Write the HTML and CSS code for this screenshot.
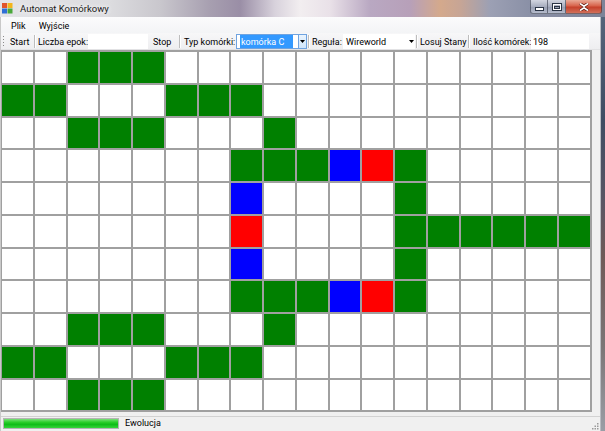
FILE: index.html
```html
<!DOCTYPE html>
<html lang="pl">
<head>
<meta charset="utf-8">
<title>Automat Komórkowy</title>
<link rel="stylesheet" href="styles.css">
</head>
<body>
<div class="window">
  <header class="titlebar">
    <svg class="app-icon" viewBox="0 0 11 11" width="11" height="11">
      <rect x="0" y="0" width="5" height="5" fill="#e2542a"/>
      <rect x="5.5" y="0" width="5" height="5" fill="#f3b51c"/>
      <rect x="0" y="5.5" width="5" height="5" fill="#2f6fd6"/>
      <rect x="5.5" y="5.5" width="5" height="5" fill="#4aa83a"/>
    </svg>
    <span class="title">Automat Komórkowy</span>
    <div class="caption-buttons">
      <div class="cap-btn cap-min">
        <svg viewBox="0 0 9 4" width="9" height="4"><rect x="0.5" y="0.5" width="8" height="3" fill="#fff" stroke="#2b3545" stroke-width="1"/></svg>
      </div>
      <div class="cap-btn cap-max">
        <svg viewBox="0 0 10 8" width="10" height="8"><rect x="0.5" y="0.5" width="9" height="7" fill="none" stroke="#2b3545" stroke-width="1"/><rect x="1.5" y="1.5" width="7" height="5" fill="none" stroke="#fff" stroke-width="1"/><rect x="2.5" y="3.5" width="5" height="2" fill="none" stroke="#2b3545" stroke-width="1"/></svg>
      </div>
      <div class="cap-btn cap-close">
        <svg viewBox="0 0 10 8" width="10" height="8"><path d="M1 0.5 L5 3.2 L9 0.5 M1 7.5 L5 4.8 L9 7.5" stroke="#5a1a10" stroke-width="3" fill="none"/><path d="M1 0.5 L5 3.2 L9 0.5 M1 7.5 L5 4.8 L9 7.5" stroke="#fff" stroke-width="1.6" fill="none"/></svg>
      </div>
    </div>
  </header>
  <div class="frame">
    <div class="client">
      <nav class="menu">
        <span class="menu-item">Plik</span>
        <span class="menu-item">Wyjście</span>
      </nav>
      <div class="toolbar">
        <span class="grip"></span>
        <span class="tb-btn tb-start">Start</span>
        <span class="tb-sep"></span>
        <span class="tb-label tb-epoki">Liczba epok:</span>
        <span class="tb-text tb-text-epoki"></span>
        <span class="tb-btn tb-stop">Stop</span>
        <span class="tb-sep"></span>
        <span class="tb-label tb-typ">Typ komórki:</span>
        <span class="tb-combo tb-combo-focus">
          <span class="combo-value"><span class="combo-selected">komórka C</span></span>
          <span class="combo-arrow combo-arrow-hot"><svg viewBox="0 0 5 3" width="5" height="3"><path d="M0 0 H5 L2.5 3 Z" fill="#000"/></svg></span>
        </span>
        <span class="tb-sep"></span>
        <span class="tb-label tb-regula">Reguła:</span>
        <span class="tb-combo tb-combo-plain">
          <span class="combo-value">Wireworld</span>
          <span class="combo-arrow"><svg viewBox="0 0 5 3" width="5" height="3"><path d="M0 0 H5 L2.5 3 Z" fill="#000"/></svg></span>
        </span>
        <span class="tb-sep"></span>
        <span class="tb-btn tb-losuj">Losuj Stany</span>
        <span class="tb-sep"></span>
        <span class="tb-label tb-ilosc">Ilość komórek:</span>
        <span class="tb-text tb-text-ilosc">198</span>
      </div>
      <div class="board-area">
        <div class="board">
          <i class="c"></i><i class="c"></i><i class="c g"></i><i class="c g"></i><i class="c g"></i><i class="c"></i><i class="c"></i><i class="c"></i><i class="c"></i><i class="c"></i><i class="c"></i><i class="c"></i><i class="c"></i><i class="c"></i><i class="c"></i><i class="c"></i><i class="c"></i><i class="c"></i>
          <i class="c g"></i><i class="c g"></i><i class="c"></i><i class="c"></i><i class="c"></i><i class="c g"></i><i class="c g"></i><i class="c g"></i><i class="c"></i><i class="c"></i><i class="c"></i><i class="c"></i><i class="c"></i><i class="c"></i><i class="c"></i><i class="c"></i><i class="c"></i><i class="c"></i>
          <i class="c"></i><i class="c"></i><i class="c g"></i><i class="c g"></i><i class="c g"></i><i class="c"></i><i class="c"></i><i class="c"></i><i class="c g"></i><i class="c"></i><i class="c"></i><i class="c"></i><i class="c"></i><i class="c"></i><i class="c"></i><i class="c"></i><i class="c"></i><i class="c"></i>
          <i class="c"></i><i class="c"></i><i class="c"></i><i class="c"></i><i class="c"></i><i class="c"></i><i class="c"></i><i class="c g"></i><i class="c g"></i><i class="c g"></i><i class="c b"></i><i class="c r"></i><i class="c g"></i><i class="c"></i><i class="c"></i><i class="c"></i><i class="c"></i><i class="c"></i>
          <i class="c"></i><i class="c"></i><i class="c"></i><i class="c"></i><i class="c"></i><i class="c"></i><i class="c"></i><i class="c b"></i><i class="c"></i><i class="c"></i><i class="c"></i><i class="c"></i><i class="c g"></i><i class="c"></i><i class="c"></i><i class="c"></i><i class="c"></i><i class="c"></i>
          <i class="c"></i><i class="c"></i><i class="c"></i><i class="c"></i><i class="c"></i><i class="c"></i><i class="c"></i><i class="c r"></i><i class="c"></i><i class="c"></i><i class="c"></i><i class="c"></i><i class="c g"></i><i class="c g"></i><i class="c g"></i><i class="c g"></i><i class="c g"></i><i class="c g"></i>
          <i class="c"></i><i class="c"></i><i class="c"></i><i class="c"></i><i class="c"></i><i class="c"></i><i class="c"></i><i class="c b"></i><i class="c"></i><i class="c"></i><i class="c"></i><i class="c"></i><i class="c g"></i><i class="c"></i><i class="c"></i><i class="c"></i><i class="c"></i><i class="c"></i>
          <i class="c"></i><i class="c"></i><i class="c"></i><i class="c"></i><i class="c"></i><i class="c"></i><i class="c"></i><i class="c g"></i><i class="c g"></i><i class="c g"></i><i class="c b"></i><i class="c r"></i><i class="c g"></i><i class="c"></i><i class="c"></i><i class="c"></i><i class="c"></i><i class="c"></i>
          <i class="c"></i><i class="c"></i><i class="c g"></i><i class="c g"></i><i class="c g"></i><i class="c"></i><i class="c"></i><i class="c"></i><i class="c g"></i><i class="c"></i><i class="c"></i><i class="c"></i><i class="c"></i><i class="c"></i><i class="c"></i><i class="c"></i><i class="c"></i><i class="c"></i>
          <i class="c g"></i><i class="c g"></i><i class="c"></i><i class="c"></i><i class="c"></i><i class="c g"></i><i class="c g"></i><i class="c g"></i><i class="c"></i><i class="c"></i><i class="c"></i><i class="c"></i><i class="c"></i><i class="c"></i><i class="c"></i><i class="c"></i><i class="c"></i><i class="c"></i>
          <i class="c"></i><i class="c"></i><i class="c g"></i><i class="c g"></i><i class="c g"></i><i class="c"></i><i class="c"></i><i class="c"></i><i class="c"></i><i class="c"></i><i class="c"></i><i class="c"></i><i class="c"></i><i class="c"></i><i class="c"></i><i class="c"></i><i class="c"></i><i class="c"></i>
        </div>
      </div>
      <div class="statusbar">
        <div class="progress"><div class="progress-fill"></div></div>
        <span class="status-label">Ewolucja</span>
        <svg class="size-grip" viewBox="0 0 8 8" width="8" height="8">
          <rect x="6" y="0" width="1.5" height="1.5" fill="#9a9a9a"/>
          <rect x="3.5" y="2.5" width="1.5" height="1.5" fill="#9a9a9a"/>
          <rect x="6" y="2.5" width="1.5" height="1.5" fill="#9a9a9a"/>
          <rect x="1" y="5" width="1.5" height="1.5" fill="#9a9a9a"/>
          <rect x="3.5" y="5" width="1.5" height="1.5" fill="#9a9a9a"/>
          <rect x="6" y="5" width="1.5" height="1.5" fill="#9a9a9a"/>
        </svg>
      </div>
    </div>
    <div class="frame-edge"></div>
  </div>
</div>
</body>
</html>
```
FILE: styles.css
```css
* { box-sizing: border-box; }
html, body { margin: 0; padding: 0; }
body {
  width: 605px;
  height: 431px;
  overflow: hidden;
  font-family: Roboto, "Noto Sans", "Liberation Sans", sans-serif;
  font-size: 9px;
  color: #000;
  background: #f0f0f0;
}
.window { display: flex; flex-direction: column; height: 431px; }

/* title bar */
.titlebar {
  height: 17px;
  flex: none;
  display: flex;
  align-items: flex-start;
  background: linear-gradient(90deg, #e4e4e7 0px, #dcdcdf 110px, #c9c7cd 160px, #a79fb0 210px, #9a8ea6 240px, #d8d2dc 275px, #f2eef0 300px, #e9e1e8 330px, #b9a8c2 370px, #b7a0b9 410px, #d4a98c 440px, #c7a595 460px, #9ca0b4 490px, #8a90a6 530px, #7d8398 605px);
}
.app-icon { margin: 3px 0 0 2px; flex: none; }
.title {
  margin-left: 7px;
  padding-top: 1px;
  line-height: 16px;
  font-size: 9.5px;
  color: #1b1b1b;
  text-shadow: 0 0 4px rgba(255,255,255,0.9), 0 0 7px rgba(255,255,255,0.7);
}
.caption-buttons { margin-left: auto; margin-right: 3px; display: flex; height: 14px; }
.cap-btn {
  height: 14px;
  display: flex;
  align-items: center;
  justify-content: center;
  border: 1px solid rgba(50, 56, 70, 0.6);
  border-top: none;
}
.cap-min {
  width: 18px;
  border-radius: 0 0 0 3px;
  background: linear-gradient(rgba(235,238,244,0.75), rgba(190,196,210,0.6) 50%, rgba(160,168,186,0.6) 51%, rgba(200,206,220,0.7));
}
.cap-min svg { margin-top: 4px; }
.cap-max {
  width: 18px;
  border-left: none;
  background: linear-gradient(rgba(235,238,244,0.75), rgba(190,196,210,0.6) 50%, rgba(160,168,186,0.6) 51%, rgba(200,206,220,0.7));
}
.cap-close {
  width: 36px;
  border-left: none;
  border-radius: 0 0 3px 0;
  background: linear-gradient(#e9a996, #d8644c 45%, #c6412b 55%, #d2705a);
}

/* frame */
.frame { flex: 1; display: flex; min-height: 0; }
.client { width: 600px; flex: none; display: flex; flex-direction: column; border-left: 1px solid #c9c9c9; }
.frame-edge {
  flex: 1;
  border-left: 1px solid #b9bcc2;
  background: linear-gradient(#55647a, #3f4d63 25%, #5a5664 45%, #6f5a58 58%, #7b7677 80%, #9a9ea6);
}

/* menu */
.menu {
  height: 16px;
  flex: none;
  display: flex;
  align-items: center;
  padding-left: 3px;
  padding-top: 2px;
  background: linear-gradient(#fbfbfc, #f3f4f6);
}
.menu-item { padding: 0 6px 0 7px; line-height: 14px; }

/* toolbar */
.toolbar {
  height: 17px;
  flex: none;
  display: flex;
  align-items: center;
  background: linear-gradient(#f7f7f8, #eeeef0);
  border-bottom: 1px solid #e2e2e4;
}
.grip {
  width: 3px;
  height: 12px;
  margin-left: 1px;
  background: radial-gradient(circle, #8a8a8a 0.8px, transparent 1px) 0 0 / 3px 3px repeat-y;
}
.tb-btn, .tb-label { line-height: 13px; padding-top: 2px; white-space: nowrap; }
.tb-start { width: 28px; padding-left: 5px; }
.tb-sep {
  width: 1px;
  height: 13px;
  margin: 0 2px 0 1px;
  background: #bdbdbd;
  box-shadow: 1px 0 0 #ffffff;
}
.tb-epoki { width: 51px; padding-left: 1px; }
.tb-text { height: 15px; background: #fff; line-height: 13px; padding: 2px 0 0 2px; }
.tb-text-epoki { width: 60px; }
.tb-stop { width: 30px; padding-left: 5px; }
.tb-typ { width: 53px; padding-left: 2px; }
.tb-combo { display: flex; height: 15px; background: #fff; margin-left: 1px; }
.tb-combo-focus { width: 71px; border: 1px solid #6fa3e0; }
.tb-combo-plain { width: 72px; }
.combo-value { flex: 1; display: flex; align-items: center; line-height: 13px; padding-left: 3px; }
.tb-combo-plain .combo-value { padding: 2px 0 0 3px; line-height: 13px; }
.combo-selected { background: #3399ff; color: #fff; padding: 1px 1px 0; line-height: 12px; width: 53px; }
.combo-arrow { width: 8px; display: flex; align-items: center; justify-content: center; }
.combo-arrow-hot { border-left: 1px solid #6fa3e0; background: linear-gradient(#eaf4fd, #cfe5fb); }
.tb-regula { width: 31px; padding-left: 1px; }
.tb-losuj { width: 48px; padding-left: 1px; }
.tb-ilosc { width: 60px; padding-left: 2px; }
.tb-text-ilosc { width: 58px; }

/* board */
.board-area { height: 366px; flex: none; display: flex; align-items: flex-start; }
.board {
  display: grid;
  grid-template-columns: repeat(18, 30.75px);
  grid-auto-rows: 30.75px;
  gap: 2px;
  padding: 2px 2px 2px 1px;
  background: #a0a0a0;
}
.c { display: block; background: #fff; }
.c.g { background: #008000; }
.c.b { background: #0000ff; }
.c.r { background: #ff0000; }

/* status bar */
.statusbar {
  height: 22px;
  flex: none;
  display: flex;
  align-items: flex-start;
  border-top: 1px solid #d2d2d2;
  background: #f0f0f0;
}
.progress {
  width: 116px;
  height: 11px;
  margin: 1px 0 0 2px;
  border: 1px solid #b4b4b4;
  background: #e6e6e6;
  padding: 0;
}
.progress-fill {
  height: 100%;
  background: linear-gradient(#7be07a, #2ccf2c 35%, #0fbd18 60%, #35d43a);
}
.status-label { margin-left: 6px; line-height: 13px; }
.size-grip { margin: 6px 1px 0 auto; }
```
